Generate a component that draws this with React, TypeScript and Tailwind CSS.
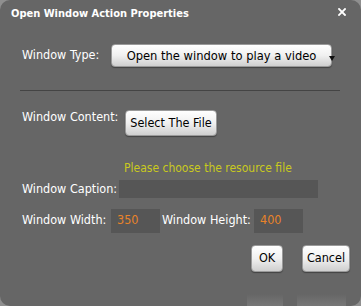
import React from "react";

const font = { fontFamily: '"DejaVu Sans Condensed", "DejaVu Sans", sans-serif' };

function Btn({ children, className }: { children: React.ReactNode; className: string }) {
  return (
    <div
      className={
        "flex items-center justify-center rounded-[4px] border border-[#9a9a9a] bg-gradient-to-b from-[#ffffff] via-[#f0f0f0] to-[#cfcfcf] text-[12.5px] text-black shadow-[0_1px_1px_rgba(0,0,0,0.35)] " +
        className
      }
    >
      {children}
    </div>
  );
}

export default function App() {
  return (
    <div className="w-[361px] h-[306px] bg-[#8f8f8f]" style={font}>
      <div className="relative w-[361px] h-[306px] rounded-[10px] bg-[#666666] overflow-hidden">
        <div className="flex items-center justify-between pl-[11px] pr-[15px] pt-[4px] h-[24px]">
          <span className="text-[11px] font-bold text-white">Open Window Action Properties</span>
          <svg width="8" height="8" viewBox="0 0 8 8" className="mt-[-5px]">
            <path d="M1 1 L7 7 M7 1 L1 7" stroke="white" strokeWidth="1.8" strokeLinecap="square" />
          </svg>
        </div>

        <div className="pl-[22px] pr-[20px]">
          <div className="flex items-start mt-[20px] h-[23px]">
            <span className="text-[12.5px] text-white w-[89px] pt-[2px]">Window Type:</span>
            <div className="relative">
              <Btn className="w-[221px] h-[23px] !text-[12.8px]">Open the window to play a video</Btn>
              <div className="absolute right-[-3px] top-[12px] w-0 h-0 border-l-[3px] border-r-[3px] border-t-[5px] border-l-transparent border-r-transparent border-t-[#111]" />
            </div>
          </div>

          <div className="mt-[23px] h-px bg-[#444444] w-[320px] ml-[-2px]" />

          <div className="flex items-start mt-[19px]">
            <span className="text-[12.5px] text-white w-[103px] mt-[-2px]">Window Content:</span>
            <Btn className="w-[92px] h-[26px]">Select The File</Btn>
          </div>

          <div className="mt-[24px] ml-[102px] text-[12px] text-[#c9c91e] leading-[16px]">
            Please choose the resource file
          </div>

          <div className="flex items-center mt-[4px]">
            <span className="text-[12.5px] text-white w-[97px]">Window Caption:</span>
            <div className="w-[199px] h-[18px] bg-[#565656]" />
          </div>

          <div className="flex items-center mt-[10px]">
            <span className="text-[12.5px] text-white w-[89px]">Window Width:</span>
            <div className="w-[49px] h-[24px] bg-[#565656] flex items-center pl-[6px] text-[12.5px] text-[#e8832a]">350</div>
            <span className="text-[12.5px] text-white w-[94px] pl-[2px]">Window Height:</span>
            <div className="w-[49px] h-[24px] bg-[#565656] flex items-center pl-[6px] text-[12.5px] text-[#e8832a]">400</div>
          </div>

          <div className="flex justify-end mt-[12px] mr-[-9px] gap-[19px]">
            <Btn className="w-[32px] h-[27px]">OK</Btn>
            <Btn className="w-[48px] h-[27px]">Cancel</Btn>
          </div>
        </div>

        <div className="absolute left-[247px] top-[294px] w-[36px] h-[12px] bg-gradient-to-t from-[#777777] to-[#666666]" />
        <div className="absolute left-[297px] top-[294px] w-[49px] h-[12px] bg-gradient-to-t from-[#777777] to-[#666666]" />
      </div>
    </div>
  );
}
